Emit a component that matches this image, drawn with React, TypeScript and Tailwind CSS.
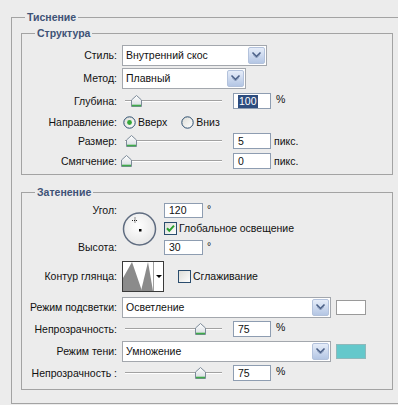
import React from "react";

function Chevron() {
  return (
    <svg width="11" height="9" viewBox="0 0 11 9">
      <path d="M1.5 1.5 L5.5 5.5 L9.5 1.5" fill="none" stroke="#4a5f86" strokeWidth="1.6" />
      <path d="M2.5 4 L5.5 7 L8.5 4" fill="none" stroke="#8a9cbc" strokeWidth="1" />
    </svg>
  );
}

function Dropdown({ w, text }: { w: string; text: string }) {
  return (
    <div className={`flex h-full border border-[#a3a7ad] bg-white ${w}`}>
      <div className="flex flex-1 items-center pl-[3px]">{text}</div>
      <div className="m-[1px] flex w-[17px] items-center justify-center rounded-[2px] border border-[#b3c2dc] bg-gradient-to-b from-[#e6edf9] to-[#b4c6e4]">
        <Chevron />
      </div>
    </div>
  );
}

function Input({ value, selected, w = "w-[38px]", h = "h-[16px]" }: { value: string; selected?: boolean; w?: string; h?: string }) {
  return (
    <div className={`flex items-center border border-[#8e9db1] bg-white pl-[4px] ${w} ${h}`}>
      {selected ? <span className="bg-[#2d4c7e] px-[1px] leading-[13px] text-white">{value}</span> : <span>{value}</span>}
    </div>
  );
}

function Thumb() {
  return (
    <svg width="11" height="12" viewBox="0 0 11 12">
      <defs>
        <linearGradient id="tg" x1="0" y1="0" x2="0" y2="1">
          <stop offset="0" stopColor="#ffffff" />
          <stop offset="1" stopColor="#d6dbe0" />
        </linearGradient>
      </defs>
      <path d="M5.5 0.5 L10.5 5 L10.5 11.5 L0.5 11.5 L0.5 5 Z" fill="url(#tg)" stroke="#7d8b99" />
      <path d="M1 10.5 L10 10.5" stroke="#3faa4a" strokeWidth="1.6" />
    </svg>
  );
}

function Slider({ pos }: { pos: number }) {
  return (
    <div className="relative h-[16px] w-[100px]">
      <div className="absolute left-[3px] right-0 top-[7px] h-[2px] border-t border-b border-t-[#a2a2a2] border-b-white" />
      <div className="absolute top-[2px]" style={{ left: pos - 5 }}>
        <Thumb />
      </div>
    </div>
  );
}

function Radio({ on }: { on?: boolean }) {
  return (
    <svg width="13" height="13" viewBox="0 0 13 13">
      <defs>
        <linearGradient id="rg" x1="0" y1="0" x2="1" y2="1">
          <stop offset="0" stopColor="#dcdcd6" />
          <stop offset="1" stopColor="#ffffff" />
        </linearGradient>
      </defs>
      <circle cx="6.5" cy="6.5" r="5.7" fill="url(#rg)" stroke="#2b4d6e" />
      {on && <circle cx="6.5" cy="6.5" r="2.4" fill="#35a839" />}
    </svg>
  );
}

function Check({ on }: { on?: boolean }) {
  return (
    <svg width="13" height="13" viewBox="0 0 13 13">
      <defs>
        <linearGradient id="cg" x1="0" y1="0" x2="1" y2="1">
          <stop offset="0" stopColor="#dcdcd6" />
          <stop offset="1" stopColor="#ffffff" />
        </linearGradient>
      </defs>
      <rect x="0.5" y="0.5" width="12" height="12" fill="url(#cg)" stroke="#2b4d6e" />
      {on && <path d="M3 6.3 L5.3 8.8 L10 3.6" fill="none" stroke="#2aa02e" strokeWidth="2" />}
    </svg>
  );
}

function Dial() {
  return (
    <svg width="36" height="35" viewBox="0 0 36 35">
      <defs>
        <radialGradient id="dg" cx="0.45" cy="0.4" r="0.6">
          <stop offset="0" stopColor="#ffffff" />
          <stop offset="1" stopColor="#e6e6e6" />
        </radialGradient>
      </defs>
      <circle cx="17.5" cy="17" r="16" fill="url(#dg)" stroke="#5f6c80" strokeWidth="1.5" />
      <path d="M13 5.5 L13 11.5 M10 8.5 L16 8.5" stroke="#222" strokeWidth="1" strokeDasharray="1 1" />
      <rect x="17" y="17" width="2.5" height="2.5" fill="#000" />
    </svg>
  );
}

function Contour() {
  return (
    <svg width="42" height="31" viewBox="0 0 42 31">
      <rect x="0.5" y="0.5" width="41" height="30" fill="#ffffff" stroke="#3a3a3a" />
      <polygon points="1,30 1,17 10,1 20,30" fill="#8b8b8b" />
      <polygon points="19,30 26,1 31,30" fill="#8b8b8b" />
      <line x1="31.5" y1="1" x2="31.5" y2="30" stroke="#a0a0a0" />
      <polygon points="34,14 40,14 37,17" fill="#000" />
    </svg>
  );
}

function Label({ children }: { children: React.ReactNode }) {
  return <div className="w-[95px] shrink-0 text-right">{children}</div>;
}

export default function App() {
  return (
    <div className="h-[405px] w-[398px] overflow-hidden bg-[#ececec] pt-[11px] font-['Liberation_Sans',Arial,sans-serif] text-[10.5px] leading-[13px] text-[#111]">
      <fieldset className="ml-[11px] border-b border-l border-t border-[#a3a3a3] p-0">
        <legend className="ml-[13px] px-[2px] font-bold leading-[13px] text-[#3e5276]">Тиснение</legend>

        <fieldset className="ml-[9px] mt-[3px] w-[372px] border border-[#a3a3a3] p-0 pb-[5px]">
          <legend className="ml-[13px] px-[2px] font-bold leading-[13px] text-[#3e5276]">Структура</legend>

          <div className="mt-[5px] flex h-[21px] items-center">
            <Label>Стиль:</Label>
            <div className="ml-[5px] h-full">
              <Dropdown w="w-[145px]" text="Внутренний скос" />
            </div>
          </div>

          <div className="mt-[2px] flex h-[21px] items-center">
            <Label>Метод:</Label>
            <div className="ml-[5px] h-full">
              <Dropdown w="w-[124px]" text="Плавный" />
            </div>
          </div>

          <div className="mt-[4px] flex h-[16px] items-center">
            <Label>Глубина:</Label>
            <div className="ml-[5px]">
              <Slider pos={14} />
            </div>
            <div className="ml-[11px]">
              <Input value="100" selected />
            </div>
            <div className="ml-[5px] self-start">%</div>
          </div>

          <div className="mt-[5px] flex h-[16px] items-center">
            <Label>Направление:</Label>
            <div className="ml-[6px] flex items-center">
              <Radio on />
              <span className="ml-[2px]">Вверх</span>
            </div>
            <div className="ml-[14px] flex items-center">
              <Radio />
              <span className="ml-[2px]">Вниз</span>
            </div>
          </div>

          <div className="mt-[3px] flex h-[16px] items-center">
            <Label>Размер:</Label>
            <div className="ml-[5px]">
              <Slider pos={9} />
            </div>
            <div className="ml-[11px]">
              <Input value="5" />
            </div>
            <div className="ml-[3px]">пикс.</div>
          </div>

          <div className="mt-[4px] flex h-[16px] items-center">
            <Label>Смягчение:</Label>
            <div className="ml-[5px]">
              <Slider pos={4} />
            </div>
            <div className="ml-[11px]">
              <Input value="0" />
            </div>
            <div className="ml-[3px]">пикс.</div>
          </div>
        </fieldset>

        <fieldset className="mb-[13px] ml-[9px] mt-[11px] w-[372px] border border-[#a3a3a3] p-0 pb-[8px]">
          <legend className="ml-[13px] px-[2px] font-bold leading-[13px] text-[#3e5276]">Затенение</legend>

          <div className="mt-[4px] flex">
            <div className="flex h-[52px] w-[95px] shrink-0 flex-col justify-between text-right">
              <div className="flex h-[15px] items-center justify-end">Угол:</div>
              <div className="flex h-[15px] items-center justify-end">Высота:</div>
            </div>
            <div className="ml-[5px] flex w-[36px] items-center pt-[1px]">
              <Dial />
            </div>
            <div className="ml-[6px] flex flex-col">
              <div className="flex items-start">
                <Input value="120" w="w-[39px]" h="h-[15px]" />
                <span className="ml-[4px]">°</span>
              </div>
              <div className="mt-[4px] flex h-[13px] items-center">
                <Check on />
                <span className="ml-[2px]">Глобальное освещение</span>
              </div>
              <div className="mt-[5px] flex items-start">
                <Input value="30" w="w-[39px]" h="h-[15px]" />
                <span className="ml-[4px]">°</span>
              </div>
            </div>
          </div>

          <div className="mt-[6px] flex h-[31px] items-center">
            <Label>Контур глянца:</Label>
            <div className="ml-[5px] flex">
              <Contour />
            </div>
            <div className="ml-[14px] flex items-center">
              <Check />
              <span className="ml-[2px]">Сглаживание</span>
            </div>
          </div>

          <div className="mt-[5px] flex h-[21px] items-center">
            <Label>Режим подсветки:</Label>
            <div className="ml-[5px] h-full">
              <Dropdown w="w-[209px]" text="Осветление" />
            </div>
            <div className="ml-[5px] h-[15px] w-[30px] border border-[#9a9a9a] bg-white" />
          </div>

          <div className="mt-[3px] flex h-[16px] items-center">
            <Label>Непрозрачность:</Label>
            <div className="ml-[5px]">
              <Slider pos={78} />
            </div>
            <div className="ml-[11px]">
              <Input value="75" />
            </div>
            <div className="ml-[5px] self-start">%</div>
          </div>

          <div className="mt-[4px] flex h-[21px] items-center">
            <Label>Режим тени:</Label>
            <div className="ml-[5px] h-full">
              <Dropdown w="w-[209px]" text="Умножение" />
            </div>
            <div className="ml-[5px] h-[15px] w-[30px] border border-[#8fb8ba] bg-[#64c8cb]" />
          </div>

          <div className="mt-[3px] flex h-[16px] items-center">
            <Label>Непрозрачность :</Label>
            <div className="ml-[5px]">
              <Slider pos={78} />
            </div>
            <div className="ml-[11px]">
              <Input value="75" />
            </div>
            <div className="ml-[5px] self-start">%</div>
          </div>
        </fieldset>
      </fieldset>
    </div>
  );
}
